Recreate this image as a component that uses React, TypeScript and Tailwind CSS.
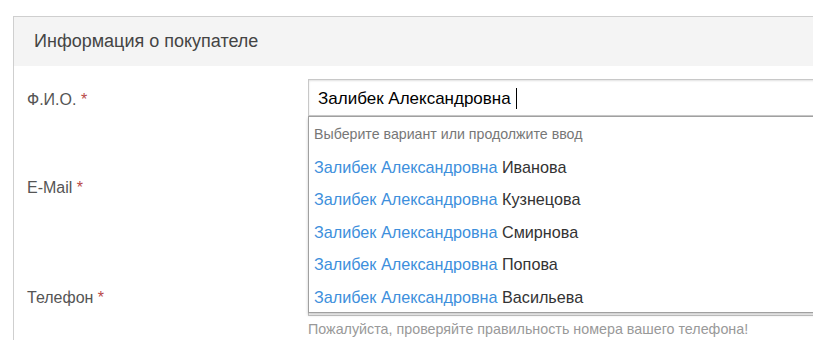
import React from "react";

const suggestions = ["Иванова", "Кузнецова", "Смирнова", "Попова", "Васильева"];

function Label({ text, className }: { text: string; className?: string }) {
  return (
    <div className={`w-[294px] shrink-0 pl-[13px] text-[16px] text-[#555] ${className ?? ""}`}>
      {text} <span className="text-[#b94a48]">*</span>
    </div>
  );
}

export default function App() {
  return (
    <div className="w-[813px] h-[348px] overflow-hidden bg-white" style={{ fontFamily: '"Liberation Sans", Arial, sans-serif' }}>
      <div className="ml-[13px] mt-[16px] w-[900px] border-l border-t border-[#cfcfcf] bg-white">
        <div className="h-[49px] bg-[#f4f4f4] pl-[20px] flex items-center text-[18px] text-[#444]">
          Информация о покупателе
        </div>
        <div className="relative pt-[13px]">
          {/* ФИО */}
          <div className="flex items-center h-[37px]">
            <Label text="Ф.И.О." className="pt-[5px]" />
            <div className="relative flex-1 h-[37px] border border-[#c8c8c8] shadow-[inset_0_1px_2px_rgba(0,0,0,0.12)] flex items-center pl-[9px] pt-[2px] text-[17px] text-black">
              Залибек Александровна
              <span className="ml-[5px] inline-block w-px h-[21px] bg-black" />
            </div>
          </div>
          {/* E-Mail */}
          <div className="flex items-center h-[37px] mt-[53px]">
            <Label text="E-Mail" className="pt-[1px]" />
            <div className="flex-1 h-[37px] border border-[#c8c8c8]" />
          </div>
          {/* Телефон */}
          <div className="flex items-center h-[37px] mt-[73px]">
            <Label text="Телефон" className="pt-[1px]" />
            <div className="flex-1 h-[37px] border border-[#c8c8c8]" />
          </div>
          <div className="ml-[294px] mt-[3px] text-[14.3px] text-[#999]">
            Пожалуйста, проверяйте правильность номера вашего телефона!
          </div>

          {/* dropdown */}
          <div className="absolute left-[294px] top-[50px] w-[600px] h-[197px] bg-white border border-[#a0a0a0] shadow-[0_2px_3px_rgba(0,0,0,0.2)] pl-[5px] pt-[7px]">
            <div className="h-[22px] flex items-center text-[14.2px] text-[#777]">
              Выберите вариант или продолжите ввод
            </div>
            {suggestions.map((s) => (
              <div key={s} className="h-[32.5px] flex items-center text-[16.2px] text-[#333] pt-[9px]">
                <span className="text-[#3d8fdc]">Залибек Александровна</span>&nbsp;{s}
              </div>
            ))}
          </div>
        </div>
      </div>
    </div>
  );
}
